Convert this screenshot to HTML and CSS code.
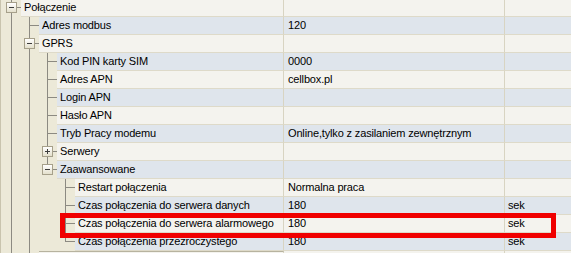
FILE: index.html
```html
<!DOCTYPE html>
<html lang="pl">
<head>
<meta charset="utf-8">
<title>Właściwości</title>
<link rel="stylesheet" href="styles.css">
</head>
<body>
<div class="tree">
  <div class="row light">
    <div class="node"><div class="indent"><span class="c t"><span class="box minus"></span></span></div>
    <div class="name">Połączenie</div></div><div class="val"></div><div class="unit"></div>
  </div>
  <div class="row blue">
    <div class="node"><div class="indent"><span class="c v"></span><span class="c t"></span></div>
    <div class="name">Adres modbus</div></div><div class="val">120</div><div class="unit"></div>
  </div>
  <div class="row light">
    <div class="node"><div class="indent"><span class="c v"></span><span class="c t"><span class="box minus"></span></span></div>
    <div class="name">GPRS</div></div><div class="val"></div><div class="unit"></div>
  </div>
  <div class="row blue">
    <div class="node"><div class="indent"><span class="c v"></span><span class="c v"></span><span class="c t"></span></div>
    <div class="name">Kod PIN karty SIM</div></div><div class="val">0000</div><div class="unit"></div>
  </div>
  <div class="row light">
    <div class="node"><div class="indent"><span class="c v"></span><span class="c v"></span><span class="c t"></span></div>
    <div class="name">Adres APN</div></div><div class="val">cellbox.pl</div><div class="unit"></div>
  </div>
  <div class="row blue">
    <div class="node"><div class="indent"><span class="c v"></span><span class="c v"></span><span class="c t"></span></div>
    <div class="name">Login APN</div></div><div class="val"></div><div class="unit"></div>
  </div>
  <div class="row light">
    <div class="node"><div class="indent"><span class="c v"></span><span class="c v"></span><span class="c t"></span></div>
    <div class="name">Hasło APN</div></div><div class="val"></div><div class="unit"></div>
  </div>
  <div class="row blue">
    <div class="node"><div class="indent"><span class="c v"></span><span class="c v"></span><span class="c t"></span></div>
    <div class="name">Tryb Pracy modemu</div></div><div class="val">Online,tylko z zasilaniem zewnętrznym</div><div class="unit"></div>
  </div>
  <div class="row light">
    <div class="node"><div class="indent"><span class="c v"></span><span class="c v"></span><span class="c t"><span class="box plus"></span></span></div>
    <div class="name">Serwery</div></div><div class="val"></div><div class="unit"></div>
  </div>
  <div class="row blue">
    <div class="node"><div class="indent"><span class="c v"></span><span class="c v"></span><span class="c l"><span class="box minus"></span></span></div>
    <div class="name">Zaawansowane</div></div><div class="val"></div><div class="unit"></div>
  </div>
  <div class="row light">
    <div class="node"><div class="indent"><span class="c v"></span><span class="c v"></span><span class="c"></span><span class="c t"></span></div>
    <div class="name">Restart połączenia</div></div><div class="val">Normalna praca</div><div class="unit"></div>
  </div>
  <div class="row blue">
    <div class="node"><div class="indent"><span class="c v"></span><span class="c v"></span><span class="c"></span><span class="c t"></span></div>
    <div class="name">Czas połączenia do serwera danych</div></div><div class="val">180</div><div class="unit">sek</div>
  </div>
  <div class="row light">
    <div class="node"><div class="indent"><span class="c v"></span><span class="c v"></span><span class="c"></span><span class="c t"></span></div>
    <div class="name">Czas połączenia do serwera alarmowego</div></div><div class="val">180</div><div class="unit">sek</div>
  </div>
  <div class="row blue">
    <div class="node"><div class="indent"><span class="c v"></span><span class="c v"></span><span class="c"></span><span class="c l"></span></div>
    <div class="name">Czas połączenia przezroczystego</div></div><div class="val">180</div><div class="unit">sek</div>
  </div>
  <div class="row light next">
    <div class="node"><div class="indent"><span class="c v"></span><span class="c t"></span></div>
    <div class="name"></div></div><div class="val"></div><div class="unit"></div>
  </div>
  <div class="mark"></div>
</div>
</body>
</html>
```
FILE: styles.css
```css
html, body {
  margin: 0;
  padding: 0;
  background: #ece9d8;
  overflow: hidden;
}
.tree {
  position: relative;
  margin-top: -1px;
  width: 571px;
  background: #ece9d8;
  border-left: 1px solid #c9c4ae;
  padding-left: 2px;
  box-sizing: border-box;
  font-family: "Liberation Sans", Arial, sans-serif;
  font-size: 11px;
  letter-spacing: -0.15px;
  color: #000;
}
.row {
  display: flex;
  height: 18px;
}
.node {
  display: flex;
  flex: none;
  width: 281px;
}
.indent {
  display: flex;
  flex: none;
}
.c {
  display: block;
  width: 18px;
  height: 18px;
  flex: none;
}
.v {
  background: linear-gradient(#8c8a82, #8c8a82) no-repeat 8px 0 / 1px 18px;
}
.t {
  background:
    linear-gradient(#8c8a82, #8c8a82) no-repeat 8px 0 / 1px 18px,
    linear-gradient(#8c8a82, #8c8a82) no-repeat 8px 8px / 10px 1px;
}
.l {
  background:
    linear-gradient(#8c8a82, #8c8a82) no-repeat 8px 0 / 1px 9px,
    linear-gradient(#8c8a82, #8c8a82) no-repeat 8px 8px / 10px 1px;
}
.box {
  display: block;
  width: 11px;
  height: 11px;
  margin: 3px 0 0 3px;
  box-sizing: border-box;
  border: 1px solid #a6a08a;
}
.minus {
  background:
    linear-gradient(#3c3c3c, #3c3c3c) no-repeat center / 5px 1px,
    linear-gradient(#ffffff, #e4e0cc);
}
.plus {
  background:
    linear-gradient(#3c3c3c, #3c3c3c) no-repeat center / 5px 1px,
    linear-gradient(#3c3c3c, #3c3c3c) no-repeat center / 1px 5px,
    linear-gradient(#ffffff, #e4e0cc);
}
.name, .val, .unit {
  height: 18px;
  line-height: 17px;
  box-sizing: border-box;
  border-bottom: 1px solid #dedac9;
  white-space: nowrap;
  overflow: hidden;
}
.name {
  flex: 1;
  min-width: 0;
  padding-left: 3px;
  border-right: 1px solid #d8d4c2;
}
.val {
  flex: none;
  width: 221px;
  padding-left: 4px;
  border-right: 1px solid #d8d4c2;
}
.unit {
  flex: 1;
  padding-left: 3px;
}
.light .name, .light .val, .light .unit { background: #f4f3ee; }
.blue .name, .blue .val, .blue .unit { background: #dfe5ec; }
.next .name { border-top: 1px solid #b7b39f; }
.mark {
  position: absolute;
  left: 59px;
  top: 214px;
  width: 496px;
  height: 25px;
  box-sizing: border-box;
  border: 5px solid #f00000;
}
```
